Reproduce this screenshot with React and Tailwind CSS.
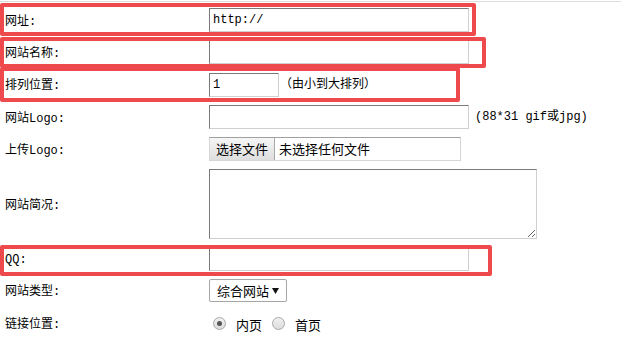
import React from 'react'

const FONT = "font-['Liberation_Mono','Noto_Sans_CJK_SC',monospace]"
const UI_FONT = "font-['Noto_Sans_CJK_SC','Liberation_Sans',sans-serif]"

const inputCls =
  'h-[24px] border border-t-[#7a7a7a] border-l-[#7a7a7a] border-r-[#cfcfcf] border-b-[#cfcfcf] bg-white px-[3px] text-[12px] text-black outline-none ' +
  FONT

function Row({ label, h, children }) {
  return (
    <div className="flex items-center" style={{ height: h }}>
      <div className={`w-[209px] shrink-0 pl-[5px] pt-[3px] text-[12px] text-black ${FONT}`}>{label}</div>
      <div className="flex items-center">{children}</div>
    </div>
  )
}

// red annotation frames drawn over the form
const MARKS = [
  { left: 0, top: 3, width: 476, height: 33 },
  { left: 0, top: 37, width: 486, height: 31 },
  { left: 0, top: 67, width: 460, height: 35 },
  { left: 0, top: 245, width: 492, height: 31 },
]

export default function App() {
  return (
    <div className="relative h-[353px] w-[621px] overflow-hidden bg-white">
      <div className="mt-px h-px bg-[#dcdcdc]" />
      <div className="pt-[2px]">
        <Row label="网址:" h={32}>
          <input className={`${inputCls} w-[260px]`} defaultValue="http://" />
        </Row>
        <Row label="网站名称:" h={32}>
          <input className={`${inputCls} w-[260px]`} />
        </Row>
        <Row label="排列位置:" h={33}>
          <input className={`${inputCls} w-[70px]`} defaultValue="1" />
          <span className={`ml-[1px] text-[12px] text-black ${FONT}`}>（由小到大排列）</span>
        </Row>
        <Row label="网站Logo:" h={32}>
          <input className={`${inputCls} w-[260px] h-[23px]`} />
          <span className={`ml-[6px] text-[12px] text-black ${FONT}`}>(88*31 gif或jpg)</span>
        </Row>
        <Row label="上传Logo:" h={32}>
          <div className={`flex h-[24px] w-[252px] items-center border border-[#d6d6d6] border-t-[#a0a0a0] ${UI_FONT}`}>
            <span className="flex h-full items-center border-r border-[#a9a9a9] bg-gradient-to-b from-[#f6f6f6] to-[#dedede] px-[6px] text-[13px] text-black">
              选择文件
            </span>
            <span className="ml-[4px] text-[13px] text-black">未选择任何文件</span>
          </div>
        </Row>
        <Row label="网站简况:" h={78}>
          <textarea
            className="h-[70px] w-[328px] resize border border-t-[#7a7a7a] border-l-[#7a7a7a] border-r-[#cfcfcf] border-b-[#cfcfcf] bg-white outline-none"
          />
        </Row>
        <Row label="QQ:" h={31}>
          <input className={`${inputCls} w-[260px] h-[22px]`} />
        </Row>
        <Row label="网站类型:" h={33}>
          <div
            className={`flex h-[23px] w-[78px] items-center justify-between rounded-[2px] border border-[#a6a6a6] bg-white pl-[7px] pr-[7px] text-[13px] text-black ${UI_FONT}`}
          >
            <span>综合网站</span>
            <svg width="7" height="6" viewBox="0 0 7 6" className="mt-px">
              <path d="M0 0h7L3.5 6z" fill="#111" />
            </svg>
          </div>
        </Row>
        <Row label="链接位置:" h={32}>
          <div className={`flex items-center pl-[4px] text-[13px] text-black ${UI_FONT}`}>
            <span className="flex h-[13px] w-[13px] items-center justify-center rounded-full border border-[#a8a8a8] bg-gradient-to-b from-[#f0f0f0] to-[#dcdcdc]">
              <span className="h-[5px] w-[5px] rounded-full bg-[#555]" />
            </span>
            <span className="ml-[10px] mt-[3px]">内页</span>
            <span className="ml-[10px] h-[13px] w-[13px] rounded-full border border-[#a8a8a8] bg-gradient-to-b from-[#f0f0f0] to-[#dcdcdc]" />
            <span className="ml-[10px] mt-[3px]">首页</span>
          </div>
        </Row>
      </div>

      {MARKS.map((m, i) => (
        <div
          key={i}
          className="pointer-events-none absolute rounded-[2px] border-[4px] border-[#ee4a4d]"
          style={m}
        />
      ))}
    </div>
  )
}
